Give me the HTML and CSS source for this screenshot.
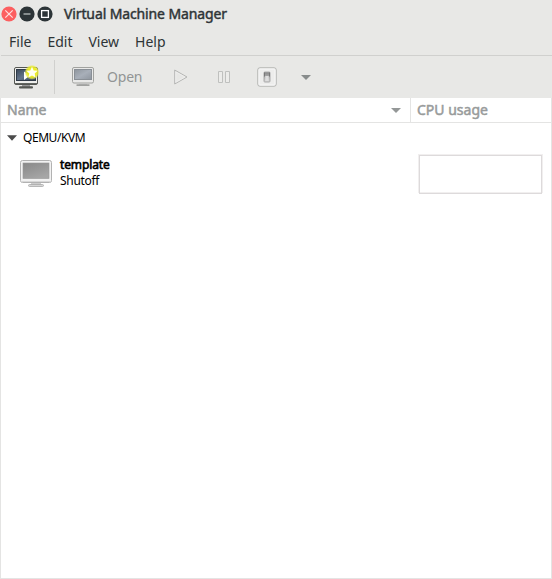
FILE: index.html
```html
<!DOCTYPE html>
<html lang="en">
<head>
<meta charset="utf-8">
<title>Virtual Machine Manager</title>
<link rel="stylesheet" href="styles.css">
</head>
<body>
<div class="window">
  <header class="titlebar">
    <svg class="controls" width="54" height="18" viewBox="0 0 54 18">
      <circle cx="9" cy="9" r="7.6" fill="#fc5f60"/>
      <path d="M5.3 5.3l7.4 7.4M12.7 5.3l-7.4 7.4" stroke="#ffdede" stroke-width="1.2"/>
      <circle cx="27" cy="9" r="7.6" fill="#2c3437"/>
      <path d="M23.5 9h7" stroke="#a5abac" stroke-width="1.5"/>
      <circle cx="45" cy="9" r="7.6" fill="#2c3437"/>
      <rect x="41.6" y="5.6" width="6.8" height="6.8" fill="none" stroke="#fff" stroke-width="1.3"/>
    </svg>
    <h1 class="title">Virtual Machine Manager</h1>
  </header>
  <nav class="menubar"><span class="file">File</span><span class="edit">Edit</span><span class="view">View</span><span class="help">Help</span></nav>
  <div class="toolbar">
    <svg class="new-vm" width="28" height="28" viewBox="0 0 28 28">
      <defs>
        <linearGradient id="screen" x2="1" y2="1"><stop stop-color="#3b4858"/><stop offset=".5" stop-color="#64748a"/><stop offset="1" stop-color="#354356"/></linearGradient>
        <radialGradient id="glow"><stop offset=".55" stop-color="#eeee20"/><stop offset=".8" stop-color="#e9eb39" stop-opacity=".8"/><stop offset="1" stop-color="#eeee55" stop-opacity="0"/></radialGradient>
      </defs>
      <rect x="2.5" y="4.5" width="23" height="17" rx="1.5" fill="#eeeeec" stroke="#555753"/>
      <rect x="4.5" y="6.5" width="19" height="11" fill="url(#screen)" stroke="#303b49"/>
      <path d="M2.5 20.5h23" stroke="#61645f"/>
      <path d="M10 22h8v2h-8z" fill="#999"/>
      <rect x="7" y="23.3" width="14" height="2.2" rx="1" fill="#555753"/>
      <path d="M12 8.5l6 4-6 4.5z" fill="#fff"/>
      <circle cx="20" cy="9.3" r="7.5" fill="url(#glow)"/>
      <path d="M20 3.7l1.7 3.7 4 .4-3 2.7.9 4-3.6-2.1-3.6 2.1.9-4-3-2.7 4-.4z" fill="#fffff2"/>
    </svg>
    <i class="separator"></i>
    <svg class="open-icon" width="24" height="24" viewBox="0 0 24 24">
      <defs><linearGradient id="dim" x2="1" y2="1"><stop stop-color="#8e959d"/><stop offset=".5" stop-color="#a8afb9"/><stop offset="1" stop-color="#8e959e"/></linearGradient></defs>
      <rect x="1.5" y="2.5" width="21" height="15.5" rx="1.5" fill="#e9e9e8" stroke="#a1a29f"/>
      <rect x="3.5" y="4.5" width="17" height="10" fill="url(#dim)" stroke="#898f96"/>
      <path d="M8 18.5h8v2H8z" fill="#c1c1c0"/>
      <rect x="5.3" y="19.2" width="13.4" height="1.8" rx=".9" fill="#a0a19f"/>
    </svg>
    <span class="open">Open</span>
    <svg class="play" width="16" height="16" viewBox="0 0 16 16"><path d="M1.7 1L14 8 1.7 15z" fill="#e7e7e5" stroke="#b5b6b4"/><path d="M2.8 3L12 8l-9.2 5.2z" fill="none" stroke="#f1f1f0" stroke-width=".7"/></svg>
    <svg class="pause" width="14" height="14" viewBox="0 0 14 14"><path d="M1.5 1.5h4v11h-4zM8.5 1.5h4v11h-4z" fill="#ececea" stroke="#bfc0be"/></svg>
    <svg class="power" width="20" height="20" viewBox="0 0 20 20">
      <defs><linearGradient id="switch" x2="0" y2="1"><stop stop-color="#858585"/><stop offset="1" stop-color="#d5d5d5"/></linearGradient></defs>
      <rect x=".8" y=".8" width="18.4" height="18.4" rx="2" fill="#ededec" stroke="#b1b2b0"/>
      <rect x="2" y="2" width="16" height="16" rx="1" fill="none" stroke="#f7f7f7"/>
      <rect x="7" y="5" width="6" height="10" rx=".8" fill="url(#switch)" stroke="#aaa"/>
      <path d="M8.3 9h3.4v5H8.3z" fill="#dedede"/><path d="M7.5 5.5v4M12.5 5.5v4" stroke="#777"/>
    </svg>
    <svg class="more" width="10" height="5" viewBox="0 0 10 5"><path d="M0 0h10L5 5z" fill="#888c8c"/></svg>
  </div>
  <main class="tree">
    <div class="columns">
      <div class="name-column"><span class="name">Name</span><svg width="10" height="5" viewBox="0 0 10 5"><path d="M0 0h10L5 5z" fill="#949797"/></svg></div>
      <div class="usage-column"><span class="cpu">CPU usage</span></div>
    </div>
    <div class="connection"><svg width="10" height="6" viewBox="0 0 10 6"><path d="M0 .3h10L5 5.7z" fill="#4b4b4b"/></svg><span class="qemu">QEMU/KVM</span></div>
    <div class="machine">
      <svg class="vm-icon" width="34" height="30" viewBox="0 0 34 30">
        <defs><linearGradient id="gray" x2=".6" y2="1"><stop stop-color="#888"/><stop offset="1" stop-color="#a6a6a6"/></linearGradient></defs>
        <rect x="1.5" y="1.5" width="31" height="22" rx="2" fill="#f2f2f2" stroke="#b2b2b2"/>
        <rect x="4" y="4" width="26" height="15.5" fill="url(#gray)" stroke="#969696" stroke-width=".6"/>
        <path d="M2 22.5h30" stroke="#d8d8d8"/>
        <path d="M12 24h10v2H12z" fill="#ccc"/>
        <rect x="9.5" y="25.5" width="15" height="2" rx="1" fill="#d6d6d6" stroke="#aaa" stroke-width=".8"/>
      </svg>
      <div class="details"><strong class="vm-name">template</strong><span class="state">Shutoff</span></div>
      <div class="graph"></div>
    </div>
  </main>
</div>
</body>
</html>
```
FILE: styles.css
```css
* { box-sizing: border-box; }
body { margin: 0; font-family: "Noto Sans", sans-serif; background: #e8e8e6; }
svg { display: block; flex: none; }
span, strong, h1 { white-space: nowrap; }
.window { width: 552px; height: 579px; display: flex; flex-direction: column; color: #2e3436; }
.titlebar { height: 28px; display: flex; align-items: center; }
.title { margin: 0 0 0 10px; font-size: 14px; line-height: 20px; font-weight: 400; letter-spacing: -.12px; -webkit-text-stroke: .45px; }
.menubar { height: 28px; border-bottom: 1px solid #d0d0ce; display: flex; align-items: center; gap: 16px; font-size: 14px; margin-left: 1px; padding-left: 8px; }
.toolbar { height: 42px; display: flex; align-items: center; color: #929595; font-size: 14px; }
.new-vm { margin-left: 12px; }
.separator { width: 1px; height: 34px; background: #d0d0ce; margin-left: 14px; }
.open-icon { margin-left: 16px; }
.open { width: 36px; margin-left: 12px; padding-bottom: 2px; letter-spacing: -.2px; }
.play { margin-left: 30px; }
.pause { margin-left: 28px; }
.power { margin-left: 26px; }
.more { margin-left: 24px; }
.tree { flex: 1; background: #fff; border: solid #e4e4e3; border-width: 0 1px 1px; }
.columns { height: 25px; border-bottom: 1px solid #e4e4e3; display: flex; color: #989b9b; font-size: 14px; -webkit-text-stroke: .5px; }
.columns span { padding-bottom: 2px; }
.name-column { width: 410px; border-right: 1px solid #e4e4e3; display: flex; align-items: center; justify-content: space-between; padding: 0 9px 0 6px; }
.usage-column { display: flex; align-items: center; padding-left: 6px; }
.connection { height: 31px; display: flex; align-items: center; gap: 6px; padding: 0 0 1px 6px; font-size: 12px; color: #000; }
.qemu { padding-bottom: 1px; letter-spacing: -.45px; }
.machine { display: flex; height: 39px; color: #000; font-size: 12px; }
.vm-icon { margin: 5px 0 0 18px; }
.details { display: flex; flex-direction: column; width: 359px; padding: 3px 0 0 7px; line-height: 16px; }
.vm-name { font-weight: 400; letter-spacing: -.12px; -webkit-text-stroke: .6px; }
.state { letter-spacing: -.3px; }
.graph { width: 125px; height: 39px; margin-left: 6px; border: 1px solid #f1efef; }
.graph::before { content: ""; display: block; height: 37px; border: 1px solid #dddadb; }
```
